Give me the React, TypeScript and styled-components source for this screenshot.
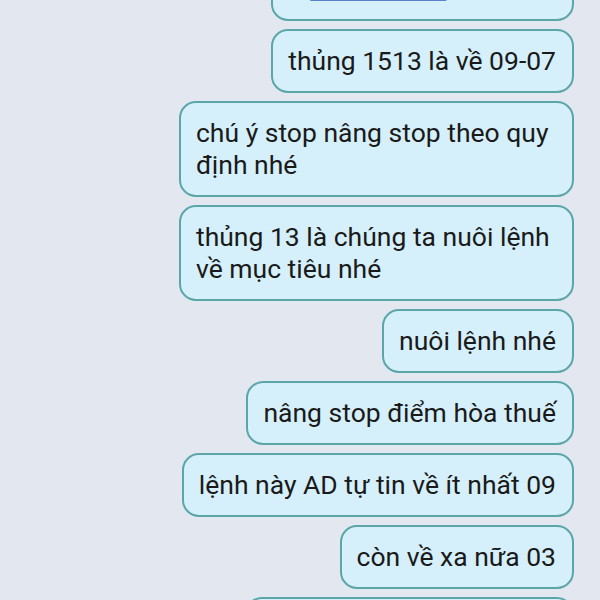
import React from 'react';
import styled, { createGlobalStyle } from 'styled-components';

const GlobalStyle = createGlobalStyle`
  html, body {
    margin: 0;
    padding: 0;
    background: #e3e8f0;
  }
`;

const Screen = styled.div`
  width: 600px;
  height: 600px;
  overflow: hidden;
  background: #e3e8f0;
  font-family: Roboto, 'Noto Sans', sans-serif;
`;

const Thread = styled.div`
  display: flex;
  flex-direction: column;
  align-items: flex-end;
  gap: 8px;
  margin-top: -43px;
  padding-right: 26px;
`;

const Bubble = styled.div`
  box-sizing: border-box;
  max-width: 395px;
  padding: 14px 16px 14px 15px;
  background: #d5f0fb;
  border: 2px solid #5aa6a8;
  border-radius: 17px;
  color: #1a1a1a;
  font-size: 26.5px;
  line-height: 32px;
`;

const Link = styled.span`
  text-decoration: underline;
  text-decoration-color: #5b82cf;
  text-decoration-thickness: 2px;
  margin-left: 22px;
`;

const messages = [
  'thủng 1513 là về 09-07',
  'chú ý stop nâng stop theo quy định nhé',
  'thủng 13 là chúng ta nuôi lệnh về mục tiêu nhé',
  'nuôi lệnh nhé',
  'nâng stop điểm hòa thuế',
  'lệnh này AD tự tin về ít nhất 09',
  'còn về xa nữa 03',
  'chốt lời một phần nhé AE',
];

export default function App() {
  return (
    <Screen>
      <GlobalStyle />
      <Thread>
        <Bubble>
          <Link>xem chi tiết</Link> ở trên nè
        </Bubble>
        {messages.map((m, i) => (
          <Bubble key={i}>{m}</Bubble>
        ))}
      </Thread>
    </Screen>
  );
}
